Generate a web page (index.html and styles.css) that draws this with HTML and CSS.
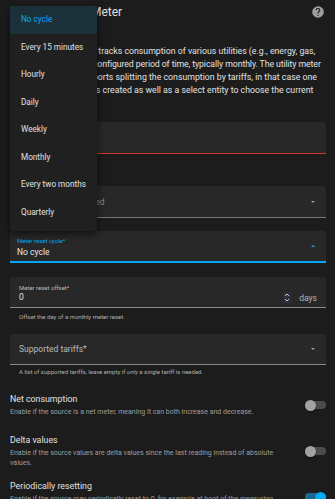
FILE: index.html
```html
<!DOCTYPE html>
<html lang="en">
<head>
  <meta charset="UTF-8" />
  <meta name="viewport" content="width=device-width, initial-scale=1" />
  <title>Utility Meter</title>
  <link rel="stylesheet" href="styles.css">
</head>
<body>
  <div class="dialog">
    <header class="dialog-header">
      <h2 class="dialog-title">Create Utility Meter</h2>
      <svg class="help-icon" viewBox="0 0 24 24"><path d="M15.07,11.25L14.17,12.17C13.45,12.89 13,13.5 13,15H11V14.5C11,13.39 11.45,12.39 12.17,11.67L13.41,10.41C13.78,10.05 14,9.55 14,9C14,7.89 13.1,7 12,7A2,2 0 0,0 10,9H8A4,4 0 0,1 12,5A4,4 0 0,1 16,9C16,9.88 15.64,10.67 15.07,11.25M13,19H11V17H13M12,2A10,10 0 0,0 2,12A10,10 0 0,0 12,22A10,10 0 0,0 22,12C22,6.47 17.5,2 12,2Z"/></svg>
    </header>

    <p class="intro">
      Create a sensor which tracks consumption of various utilities (e.g., energy, gas, <span class="tight">water, heating) over a configured period of time, typically monthly. The utility meter</span> sensor optionally supports splitting the consumption by tariffs, in that case one sensor for each tariff is created as well as a select entity to choose the current tariff.
    </p>

    <div class="field field-error">
      <span class="placeholder error-text">Name*</span>
    </div>

    <div class="field select-field field-sensor">
      <span class="placeholder dim">Input sensor is required</span>
      <span class="arrow"></span>
    </div>

    <div class="field select-field field-cycle is-focused">
      <div class="field-text">
        <span class="float-label">Meter reset cycle*</span>
        <span class="value">No cycle</span>
      </div>
      <span class="arrow up"></span>
    </div>

    <div class="field text-field field-offset">
      <div class="field-text">
        <span class="float-label">Meter reset offset*</span>
        <span class="value">0</span>
      </div>
      <span class="spinner">
        <svg viewBox="0 0 8 11"><path d="M2 4 L4 2 L6 4 M2 7 L4 9 L6 7" /></svg>
      </span>
      <span class="suffix">days</span>
    </div>
    <p class="helper helper-offset">Offset the day of a monthly meter reset.</p>

    <div class="field text-field field-tariffs">
      <span class="placeholder">Supported tariffs*</span>
      <span class="arrow"></span>
    </div>
    <p class="helper helper-tariffs">A list of supported tariffs, leave empty if only a single tariff is needed.</p>

    <div class="setting-row first-row">
      <div class="setting-text">
        <div class="setting-title">Net consumption</div>
        <div class="setting-desc">Enable if the source is a net meter, meaning it can both increase and decrease.</div>
      </div>
      <div class="switch"><span class="knob"></span></div>
    </div>

    <div class="setting-row">
      <div class="setting-text">
        <div class="setting-title">Delta values</div>
        <div class="setting-desc">Enable if the source values are delta values since the last reading instead of absolute values.</div>
      </div>
      <div class="switch"><span class="knob"></span></div>
    </div>

    <div class="setting-row">
      <div class="setting-text">
        <div class="setting-title">Periodically resetting</div>
        <div class="setting-desc">Enable if the source may periodically reset to 0, for example at boot of the measuring device. If disabled, new readings are directly recorded after data inavailability.</div>
      </div>
      <div class="switch on"><span class="knob"></span></div>
    </div>
  </div>

  <!-- open dropdown of the reset cycle select -->
  <ul class="menu">
    <li class="selected">No cycle</li>
    <li>Every 15 minutes</li>
    <li>Hourly</li>
    <li>Daily</li>
    <li>Weekly</li>
    <li>Monthly</li>
    <li>Every two months</li>
    <li>Quarterly</li>
  </ul>
</body>
</html>
```

FILE: styles.css
```css
body {
  margin: 0;
  background: #1c1c1c;
  color: #e1e1e1;
  font-family: Roboto, "Noto Sans", sans-serif;
  overflow: hidden;
}

.dialog {
  padding: 0 9px 0 10px;
}

.dialog-header {
  height: 24px;
  display: flex;
  align-items: center;
}

.dialog-title {
  flex: 1;
  margin: 0;
  padding-left: 10px;
  font-size: 12px;
  font-weight: 400;
  color: #e1e1e1;
}

.help-icon {
  width: 14px;
  height: 14px;
  fill: #9e9e9e;
  margin-right: 1px;
}

.intro {
  margin: 20.5px -1px 0 0;
  font-size: 8.75px;
  line-height: 13px;
  color: #e1e1e1;
}

.intro .tight {
  letter-spacing: -0.1px;
}

/* Filled text fields */
.field {
  box-sizing: border-box;
  height: 32px;
  background: #282828;
  border-radius: 3px 3px 0 0;
  border-bottom: 1px solid #8a8a8a;
  display: flex;
  align-items: center;
  padding: 0 11px 0 9px;
}

.field-error {
  margin-top: 12.5px;
  border-bottom: 1px solid #d2392c;
}

.field-sensor {
  margin-top: 32px;
  padding-left: 7px;
  border-bottom-color: #777;
}

.field-cycle {
  margin-top: 13px;
  padding-left: 7px;
  align-items: flex-start;
}

.field-offset {
  margin-top: 14px;
  height: 31px;
  align-items: flex-start;
  padding-right: 9px;
}

.field-tariffs {
  margin-top: 12px;
  height: 31px;
}

.is-focused {
  border-bottom: 2px solid #03a9f4;
}

.field-text {
  flex: 1;
  display: flex;
  flex-direction: column;
}

.field-cycle .field-text {
  padding-top: 6px;
}

.field-offset .field-text {
  padding-top: 7px;
}

.float-label {
  font-size: 6px;
  line-height: 8px;
  color: #bdbdbd;
}

.is-focused .float-label {
  color: #03a9f4;
}

.value {
  font-size: 8.5px;
  line-height: 11px;
  margin-top: 1.5px;
  color: #e6e6e6;
}

.field-offset .value {
  margin-top: -0.5px;
}

.placeholder {
  flex: 1;
  font-size: 8.5px;
  color: #bababa;
}

.placeholder.dim {
  color: #8a8a8a;
  letter-spacing: -0.05px;
}

.error-text {
  color: #db4437;
}

.arrow {
  width: 0;
  height: 0;
  border-left: 2.5px solid transparent;
  border-right: 2.5px solid transparent;
  border-top: 2.5px solid #9e9e9e;
}

.arrow.up {
  border-top: 0;
  border-bottom: 2.5px solid #03a9f4;
  margin-top: 14px;
}

.spinner {
  width: 8px;
  height: 11px;
  margin-top: 15px;
  border-radius: 2px;
  background: #30303a;
}

.spinner svg {
  display: block;
  width: 8px;
  height: 11px;
  fill: none;
  stroke: #c8c8c8;
  stroke-width: 1;
}

.suffix {
  margin: 15.5px 0 0 8px;
  font-size: 8.5px;
  line-height: 11px;
  color: #b5b5b5;
}

.helper {
  margin: 0;
  padding-left: 9px;
  font-size: 6px;
  line-height: 10px;
  color: #b0b0b0;
}

.helper-offset {
  margin-top: 4px;
}

.helper-tariffs {
  margin-top: 2px;
}

/* Settings rows with switches */
.setting-row {
  box-sizing: border-box;
  min-height: 46px;
  padding: 6px 0;
  display: flex;
  align-items: center;
}

.first-row {
  margin-top: 5px;
}

.setting-text {
  flex: 1;
}

.setting-title {
  font-size: 8.8px;
  line-height: 12px;
  color: #e1e1e1;
}

.setting-desc {
  margin-top: 2px;
  font-size: 7px;
  line-height: 10px;
  color: #9e9e9e;
}

.switch {
  width: 21px;
  height: 8px;
  margin-left: 16px;
  border-radius: 4px;
  background: #4c4c4c;
  display: flex;
  align-items: center;
  flex-shrink: 0;
}

.knob {
  width: 11px;
  height: 11px;
  border-radius: 50%;
  background: #a2a2a2;
  box-shadow: 0 1px 2px rgba(0, 0, 0, 0.5);
}

.switch.on {
  background: #1b6a95;
  justify-content: flex-end;
}

.switch.on .knob {
  background: #03a9f4;
}

/* Dropdown menu */
.menu {
  position: absolute;
  left: 10px;
  top: 6px;
  width: 87px;
  margin: 0;
  padding: 0 0 5px;
  list-style: none;
  background: #202020;
  box-shadow: 0 3px 8px rgba(0, 0, 0, 0.6);
  border-radius: 2px;
}

.menu li {
  height: 27.5px;
  line-height: 27.5px;
  padding-left: 11px;
  font-size: 8.2px;
  color: #e1e1e1;
  white-space: nowrap;
}

.menu li.selected {
  background: #1c3039;
  color: #03a9f4;
}
```
